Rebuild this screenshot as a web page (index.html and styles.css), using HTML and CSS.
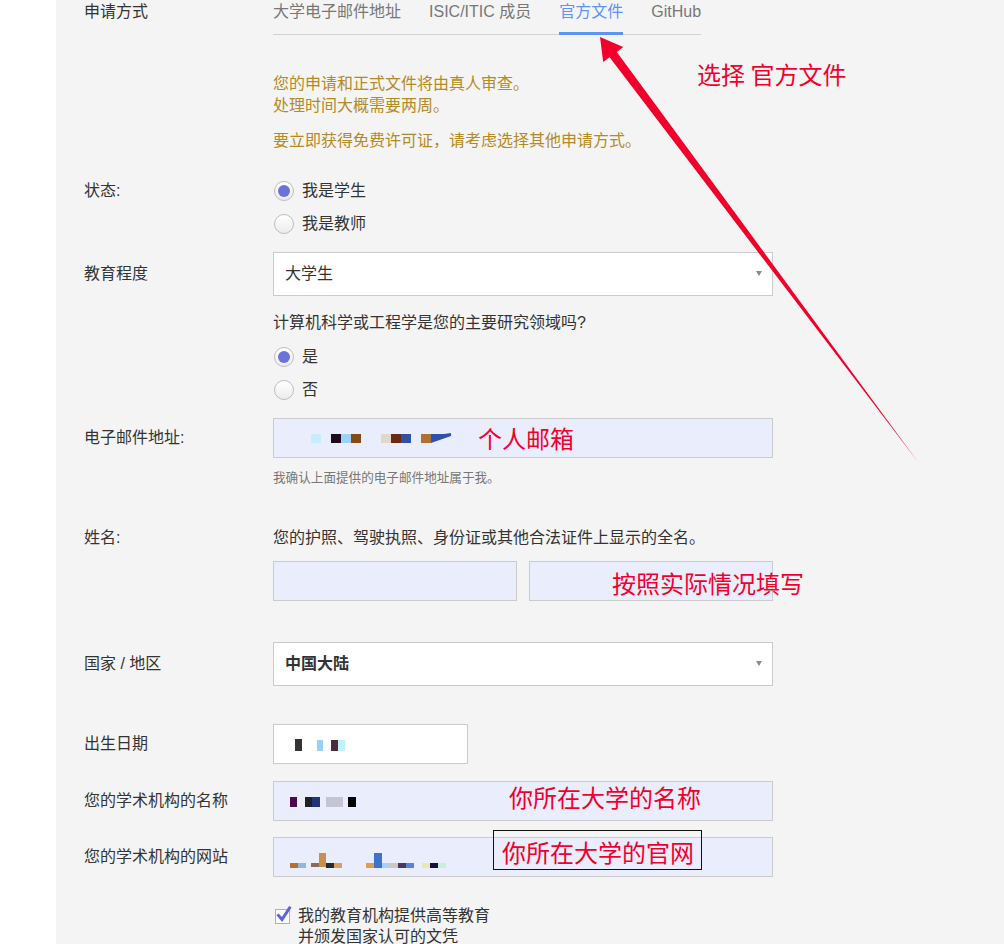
FILE: index.html
```html
<!DOCTYPE html>
<html lang="zh-CN">
<head>
<meta charset="utf-8">
<title>申请方式</title>
<link rel="stylesheet" href="styles.css">
</head>
<body>
<div class="page">
  <aside class="gutter"></aside>
  <main class="form">
    <div class="row row-method">
      <div class="label">申请方式</div>
      <div class="content">
        <nav class="tabs">
          <span class="tab">大学电子邮件地址</span>
          <span class="tab">ISIC/ITIC 成员</span>
          <span class="tab active">官方文件</span>
          <span class="tab">GitHub</span>
        </nav>
        <div class="notes">
          <p>您的申请和正式文件将由真人审查。<br>处理时间大概需要两周。</p>
          <p class="note2">要立即获得免费许可证，请考虑选择其他申请方式。</p>
        </div>
      </div>
    </div>

    <div class="row row-status">
      <div class="label label-radio">状态:</div>
      <div class="content">
        <label class="radio-item"><span class="radio checked"></span>我是学生</label>
        <label class="radio-item"><span class="radio"></span>我是教师</label>
      </div>
    </div>

    <div class="row row-center row-edu">
      <div class="label">教育程度</div>
      <div class="content">
        <div class="select"><span>大学生</span><span class="caret"></span></div>
      </div>
    </div>

    <div class="row row-question">
      <div class="label"></div>
      <div class="content">
        <div class="question">计算机科学或工程学是您的主要研究领域吗?</div>
        <div class="radios-cs">
          <label class="radio-item"><span class="radio checked"></span>是</label>
          <label class="radio-item"><span class="radio"></span>否</label>
        </div>
      </div>
    </div>

    <div class="row row-center row-email">
      <div class="label">电子邮件地址:</div>
      <div class="content">
        <div class="field filled">
          <svg class="blur" width="180" height="12" viewBox="0 0 180 12">
            <rect x="37" y="1" width="10" height="9" fill="#c8ecfb"/>
            <rect x="57" y="1" width="10" height="9" fill="#1f0a1e"/>
            <rect x="67" y="1" width="10" height="9" fill="#9ad2fa"/>
            <rect x="77" y="1" width="10" height="9" fill="#844a14"/>
            <rect x="107" y="1" width="10" height="9" fill="#e0d8cc"/>
            <rect x="117" y="1" width="10" height="9" fill="#6a2a12"/>
            <rect x="127" y="1" width="10" height="9" fill="#2f4fa8"/>
            <rect x="147" y="1" width="10" height="9" fill="#b07030"/>
            <polygon points="157,1 170,1 177,0 177,3 157,10" fill="#3050b0"/>
          </svg>
        </div>
      </div>
    </div>

    <div class="row row-help">
      <div class="label"></div>
      <div class="content help">我确认上面提供的电子邮件地址属于我。</div>
    </div>

    <div class="row row-name">
      <div class="label">姓名:</div>
      <div class="content">
        <div class="desc">您的护照、驾驶执照、身份证或其他合法证件上显示的全名。</div>
        <div class="name-fields">
          <div class="field filled"></div>
          <div class="field filled"></div>
        </div>
      </div>
    </div>

    <div class="row row-center row-country">
      <div class="label">国家 / 地区</div>
      <div class="content">
        <div class="select"><span class="bold">中国大陆</span><span class="caret"></span></div>
      </div>
    </div>

    <div class="row row-center row-birth">
      <div class="label">出生日期</div>
      <div class="content">
        <div class="field date">
          <svg class="blur" width="80" height="14" viewBox="0 0 80 14">
            <rect x="9" y="1" width="7" height="12" fill="#333333"/>
            <rect x="31" y="2" width="6" height="11" fill="#9cd0f8"/>
            <rect x="45" y="2" width="7" height="11" fill="#4a2a3a"/>
            <rect x="52" y="2" width="7" height="11" fill="#c0f0f8"/>
          </svg>
        </div>
      </div>
    </div>

    <div class="row row-center row-inst">
      <div class="label">您的学术机构的名称</div>
      <div class="content">
        <div class="field filled">
          <svg class="blur" width="100" height="12" viewBox="0 0 100 12">
            <rect x="3" y="1" width="7" height="10" fill="#4a0a50"/>
            <rect x="18" y="1" width="7" height="10" fill="#222222"/>
            <rect x="25" y="1" width="8" height="10" fill="#24347a"/>
            <rect x="39" y="1" width="17" height="10" fill="#c4c4d4"/>
            <rect x="61" y="1" width="8" height="10" fill="#000000"/>
          </svg>
        </div>
      </div>
    </div>

    <div class="row row-center row-site">
      <div class="label">您的学术机构的网站</div>
      <div class="content">
        <div class="field filled">
          <svg class="blur" width="200" height="16" viewBox="0 0 200 16">
            <rect x="3" y="11" width="8" height="5" fill="#b87030"/>
            <rect x="11" y="11" width="8" height="5" fill="#90b8d8"/>
            <rect x="24" y="11" width="8" height="4" fill="#8a6a5a"/>
            <rect x="32" y="1" width="7" height="14" fill="#c89050"/>
            <rect x="39" y="11" width="8" height="5" fill="#2a2a2a"/>
            <rect x="47" y="11" width="8" height="5" fill="#d8a060"/>
            <rect x="79" y="11" width="8" height="5" fill="#d8a050"/>
            <rect x="87" y="1" width="8" height="15" fill="#4070d0"/>
            <rect x="95" y="11" width="8" height="5" fill="#a8d0f8"/>
            <rect x="103" y="11" width="8" height="5" fill="#d0c8c0"/>
            <rect x="111" y="11" width="8" height="5" fill="#4a3a5a"/>
            <rect x="119" y="11" width="8" height="5" fill="#5a80d8"/>
            <rect x="135" y="11" width="8" height="5" fill="#e8e8b8"/>
            <rect x="143" y="11" width="8" height="5" fill="#1a1040"/>
            <rect x="151" y="11" width="8" height="5" fill="#c8f0d8"/>
          </svg>
        </div>
      </div>
    </div>

    <div class="row row-check">
      <div class="label"></div>
      <div class="content check-item">
        <span class="checkbox">
          <svg width="20" height="20" viewBox="0 0 20 20">
            <rect x="1.5" y="4.5" width="14" height="14" fill="#fafafa" stroke="#b0b0b0"/>
            <path d="M4.5 10.5 L8 14.5 L15.5 3" fill="none" stroke="#5a64d6" stroke-width="3" stroke-linecap="square"/>
          </svg>
        </span>
        <span class="check-text">我的教育机构提供高等教育<br>并颁发国家认可的文凭</span>
      </div>
    </div>
  </main>

  <svg class="arrow" width="1004" height="944" viewBox="0 0 1004 944">
    <polygon points="600,37 623.2,47.1 616.8,51.9 918,462 609.6,57.3 603.2,62.1" fill="#f2002c"/>
  </svg>
  <div class="note-red n-choose">选择 官方文件</div>
  <div class="note-red n-email">个人邮箱</div>
  <div class="note-red n-name">按照实际情况填写</div>
  <div class="note-red n-inst">你所在大学的名称</div>
  <div class="note-red n-site">你所在大学的官网</div>
</div>
</body>
</html>
```

FILE: styles.css
```css
* { box-sizing: border-box; }
html, body { margin: 0; padding: 0; }
body {
  background: #f4f4f4;
  font-family: "Liberation Sans", "Noto Sans CJK SC", sans-serif;
  font-size: 16px;
  color: #333;
  overflow: hidden;
  height: 944px;
}
p { margin: 0; }

.page { position: relative; display: flex; width: 1004px; height: 944px; }
.gutter { width: 56px; flex: none; background: #fff; }
.form { flex: 1; padding-left: 28px; padding-top: 1px; }

.row { display: flex; }
.row-center { align-items: center; }
.label { width: 189px; flex: none; line-height: 22px; white-space: nowrap; }
.content { width: 500px; line-height: 22px; }

/* tabs */
.tabs { display: inline-flex; align-items: flex-end; border-bottom: 1px solid #d2d2d2; vertical-align: top; }
.tab { color: #777; padding-bottom: 11px; margin-right: 28px; line-height: 22px; }
.tab:last-child { margin-right: 0; }
.tab.active { color: #5c94f6; padding-bottom: 9px; border-bottom: 3px solid #5c94f6; margin-bottom: -1px; }

.notes { color: #b58a22; margin-top: 38px; }
.notes .note2 { margin-top: 13px; }

/* radios */
.row-status { margin-top: 22px; }
.label-radio { line-height: 33px; }
.radio-item { display: flex; align-items: center; height: 33px; }
.radio {
  width: 20px; height: 20px; border-radius: 50%;
  border: 1px solid #bdbdbd;
  background: linear-gradient(#ffffff, #ececec);
  margin: 0 8px 0 1px; flex: none;
  display: flex; align-items: center; justify-content: center;
}
.radio.checked::before {
  content: ""; width: 12px; height: 12px; border-radius: 50%; background: #6b72d8;
}

/* selects */
.row-edu { margin-top: 11.5px; }
.select {
  height: 44px; background: #fff; border: 1px solid #cbcbcb;
  display: flex; align-items: center; justify-content: space-between;
  padding: 0 10px 0 11px;
}
.select .bold { font-weight: bold; }
.caret {
  width: 0; height: 0;
  border-left: 3.5px solid transparent; border-right: 3.5px solid transparent;
  border-top: 5px solid #8a8a8a;
}

.row-question { margin-top: 16px; }
.radios-cs { margin-top: 6.5px; }

/* fields */
.field {
  height: 40px; border: 1px solid #cbcbcb; background: #fff;
  display: flex; align-items: center;
}
.field.filled { background: #eaedfc; }
.blur { display: block; }
.row-email { margin-top: 11.5px; }
.row-email .blur { margin-top: 3px; }

.row-help { margin-top: 11px; }
.help { font-size: 12.6px; line-height: 18px; color: #777; }

.row-name { margin-top: 40px; }
.name-fields { display: flex; gap: 12px; margin-top: 12px; }
.name-fields .field { flex: 1; }

.row-country { margin-top: 41px; }
.row-birth { margin-top: 38px; }
.field.date { width: 195px; }
.field.date .blur { margin-top: 3px; margin-left: 12px; }
.row-inst { margin-top: 17px; }
.row-inst .blur { margin-left: 13px; margin-top: 3px; }
.row-site { margin-top: 16px; }
.row-site .blur { margin-left: 13px; margin-top: 7px; }

/* checkbox */
.row-check { margin-top: 28.5px; }
.check-item { display: flex; align-items: flex-start; }
.checkbox { width: 20px; height: 20px; flex: none; margin: 0 4px 0 1px; }
.checkbox svg { display: block; }
.check-text { line-height: 21px; }

/* overlays */
.arrow { position: absolute; left: 0; top: 0; pointer-events: none; }
.note-red {
  position: absolute; color: #f2002c; font-size: 24px; line-height: 24px;
  font-family: "Noto Sans CJK SC", sans-serif; white-space: nowrap;
}
.n-choose { left: 697px; top: 62px; }
.n-email { left: 478px; top: 426px; }
.n-name { left: 612px; top: 571px; }
.n-inst { left: 509px; top: 785px; }
.n-site { left: 493px; top: 830px; width: 209px; height: 40px; border: 1px solid #111; padding: 9px 0 0 8px; }
```
